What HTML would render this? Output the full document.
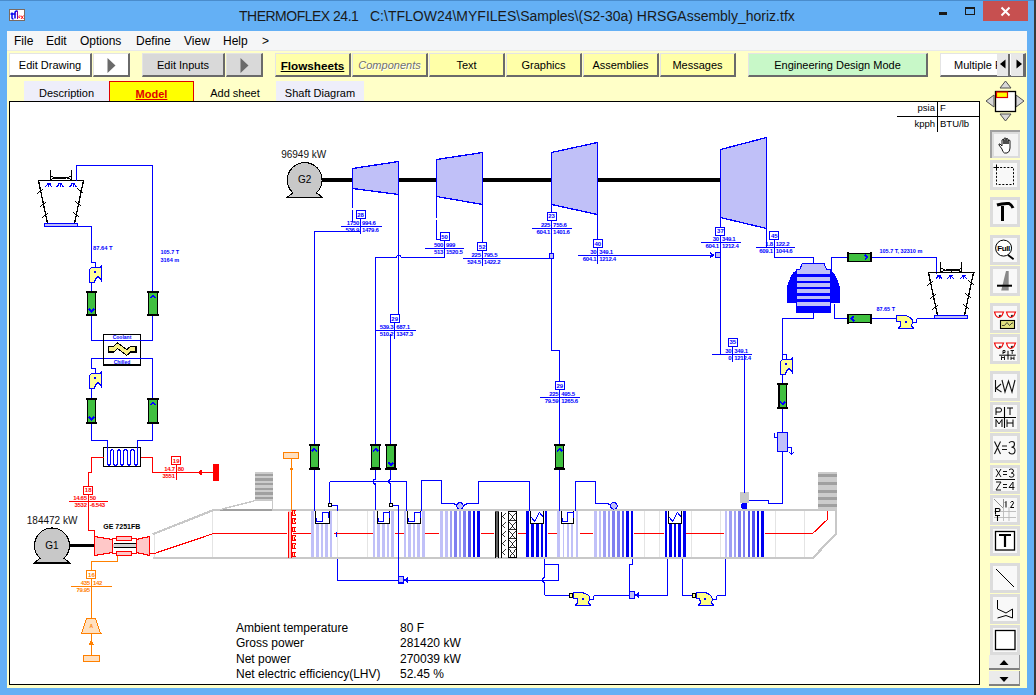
<!DOCTYPE html>
<html><head><meta charset="utf-8">
<style>
*{margin:0;padding:0;box-sizing:border-box}
html,body{width:1036px;height:695px;overflow:hidden;background:#64B0F5;font-family:"Liberation Sans",sans-serif;}
.a{position:absolute;white-space:nowrap}
#title{left:239px;top:8px;font-size:14px;color:#1a1a1a;}
#menu{left:7px;top:31px;width:1020px;height:20px;background:#F5F6F7;border-bottom:1px solid #E8E9EA}
.mi{position:absolute;top:3px;font-size:12px;color:#000}
#tool{left:7px;top:51px;width:1020px;height:637px;background:#FFFFC8}
.btn{position:absolute;top:53px;height:24px;font-size:11px;text-align:center;line-height:23px;color:#000;
 border-top:1px solid #E4E4E4;border-left:1px solid #E4E4E4;border-right:2px solid #6A6A6A;border-bottom:2px solid #6A6A6A;}
.tab{position:absolute;top:81px;height:20px;font-size:11px;text-align:center;line-height:24px}
#canvas{left:9px;top:101px;width:971px;height:584px;background:#fff;border:1px solid #000;border-right:1.4px solid #000;border-bottom:1.4px solid #000}
</style></head><body>
<div class="a" style="left:0;top:0;width:1036px;height:1px;background:#4a8ccc"></div>
<svg class="a" style="left:9px;top:9px" width="16" height="12"><rect x="0.5" y="0.5" width="15" height="11" fill="#fff" stroke="#7a6a60"/><path d="M3,3.5 V9 Q3,10 4.5,10 M1.5,5 H5.5 M6,9.5 V4 Q6,2 8,2 H8.5" stroke="#0000F0" stroke-width="1.5" fill="none"/><path d="M7.2,5 H6 M8.5,2 V10" stroke="#8000A0" stroke-width="1" fill="none"/><path d="M9.5,7.5 Q10.5,6 11,7.5 Q10.5,9.5 9.5,8.5 M12,6.5 L14.5,10 M14.5,6.5 L12,10" stroke="#FF0000" stroke-width="0.9" fill="none"/></svg>
<div class="a" id="title"><span style="letter-spacing:-0.5px">THERMOFLEX 24.1</span>&nbsp;&nbsp;&nbsp;C:\TFLOW24\MYFILES\Samples\(S2-30a) HRSGAssembly_horiz.tfx</div>
<div class="a" style="left:939px;top:12px;width:8px;height:3px;background:#1a1a1a"></div>
<div class="a" style="left:965px;top:7px;width:10px;height:8px;border:1px solid #1a1a1a;border-top:2px solid #1a1a1a"></div>
<div class="a" style="left:983px;top:1px;width:45px;height:20px;background:#C75050"></div>
<svg class="a" style="left:983px;top:1px" width="45" height="20"><path d="M18.5 6.5 L26.5 14.5 M26.5 6.5 L18.5 14.5" stroke="#fff" stroke-width="2"/></svg>

<div class="a" id="menu">
 <span class="mi" style="left:7px">File</span>
 <span class="mi" style="left:39px">Edit</span>
 <span class="mi" style="left:73px">Options</span>
 <span class="mi" style="left:129px">Define</span>
 <span class="mi" style="left:177px">View</span>
 <span class="mi" style="left:216px">Help</span>
 <span class="mi" style="left:255px">&gt;</span>
</div>
<div class="a" id="tool"></div>

<div class="btn a" style="left:9px;width:83px;background:#fff">Edit Drawing</div>
<div class="btn a" style="left:93px;width:37px;background:#fff"><svg width="12" height="17" style="margin-top:3px;margin-left:2px"><path d="M1.5 1 L9.5 8.5 L1.5 16Z" fill="#6A6A6A"/></svg></div>
<div class="btn a" style="left:142px;width:83px;background:#D9D9D9">Edit Inputs</div>
<div class="btn a" style="left:226px;width:37px;background:#D9D9D9"><svg width="12" height="17" style="margin-top:3px;margin-left:2px"><path d="M1.5 1 L9.5 8.5 L1.5 16Z" fill="#6A6A6A"/></svg></div>
<div class="btn a" style="left:275px;width:76px;background:#FFFFA8;font-weight:bold;text-decoration:underline;font-size:11.7px">Flowsheets</div>
<div class="btn a" style="left:352px;width:76px;background:#FFFFA8;font-style:italic;color:#707070;text-shadow:1px 1px 0 #fff">Components</div>
<div class="btn a" style="left:429px;width:76px;background:#FFFFA8">Text</div>
<div class="btn a" style="left:506px;width:76px;background:#FFFFA8">Graphics</div>
<div class="btn a" style="left:583px;width:76px;background:#FFFFA8">Assemblies</div>
<div class="btn a" style="left:660px;width:76px;background:#FFFFA8">Messages</div>
<div class="btn a" style="left:748px;width:180px;background:#C8F8C8">Engineering Design Mode</div>
<div class="btn a" style="left:940px;width:86px;background:#fff;text-align:left;padding-left:13px;overflow:hidden">Multiple F</div>
<div class="a" style="left:997px;top:54px;width:13px;height:22px;background:#E8E8E8;border-right:2px solid #6A6A6A"><svg width="11" height="20"><path d="M3 10 L8.5 5.5 L8.5 14.5Z" fill="#000"/></svg></div>
<div class="a" style="left:1011px;top:54px;width:14px;height:22px;background:#E8E8E8;border-right:2px solid #6A6A6A"><svg width="12" height="20"><path d="M11 10 L5.5 5.5 L5.5 14.5Z" fill="#000"/></svg></div>

<div class="tab a" style="left:24px;width:85px;background:#EEEEFA">Description</div>
<div class="tab a" style="left:109px;width:85px;background:#FFFF00;border:1px solid #E00000;border-bottom:none;color:#E00000;font-weight:bold;text-decoration:underline">Model</div>
<div class="tab a" style="left:194px;width:82px;">Add sheet</div>
<div class="tab a" style="left:276px;width:88px;background:#EEEEFA">Shaft Diagram</div>

<div class="a" id="canvas"></div>
<svg class="a" style="left:0;top:0" width="1036" height="695" font-family="Liberation Sans, sans-serif" shape-rendering="crispEdges"><line x1="37.5" y1="180.5" x2="83.5" y2="180.5" stroke="#000" stroke-width="1.3"/>
<line x1="38.5" y1="180.5" x2="47.5" y2="223.5" stroke="#000" stroke-width="1.3"/>
<line x1="83.5" y1="180.5" x2="74.5" y2="223.5" stroke="#000" stroke-width="1.3"/>
<line x1="37.5" y1="193.5" x2="43.5" y2="188.5" stroke="#000" stroke-width="1"/>
<line x1="77.5" y1="188.5" x2="83.5" y2="193.5" stroke="#000" stroke-width="1"/>
<line x1="40.5" y1="206.5" x2="46.5" y2="201.5" stroke="#000" stroke-width="1"/>
<line x1="75.5" y1="201.5" x2="81.5" y2="206.5" stroke="#000" stroke-width="1"/>
<line x1="42.5" y1="217.5" x2="48.5" y2="212.5" stroke="#000" stroke-width="1"/>
<line x1="73.5" y1="212.5" x2="79.5" y2="217.5" stroke="#000" stroke-width="1"/>
<line x1="50.5" y1="169.5" x2="50.5" y2="180.5" stroke="#000" stroke-width="1.3"/>
<line x1="71.5" y1="169.5" x2="71.5" y2="180.5" stroke="#000" stroke-width="1.3"/>
<path d="M50.6,176.0 Q60.6,181.5 71.4,176.0 M50.6,179.5 Q60.6,174.5 71.4,179.5" stroke="#000" stroke-width="1" fill="none"/>
<path d="M46.6,183.0 H50.6 M48.6,183.0 L45.1,187.0 M48.6,183.0 L52.1,187.0 M48.6,183.0 V187.0" stroke="#0000FF" stroke-width="1" fill="none"/>
<path d="M58.1,183.0 H62.1 M60.1,183.0 L56.6,187.0 M60.1,183.0 L63.6,187.0 M60.1,183.0 V187.0" stroke="#0000FF" stroke-width="1" fill="none"/>
<path d="M71.1,183.0 H75.1 M73.1,183.0 L69.6,187.0 M73.1,183.0 L76.6,187.0 M73.1,183.0 V187.0" stroke="#0000FF" stroke-width="1" fill="none"/>
<rect x="44.5" y="223.5" width="33.0" height="3.0" stroke="#0000FF" stroke-width="1.2" fill="#C0C0F8"/>
<polyline points="76.5,180.5 76.5,165.5 152.5,165.5 152.5,340.5 91.5,340.5 91.5,282.5" stroke="#0000FF" stroke-width="1.3" fill="none" stroke-linejoin="miter"/>
<polyline points="77.5,226.5 91.5,226.5 91.5,262.5 95.5,262.5 95.5,267.5" stroke="#0000FF" stroke-width="1.3" fill="none" stroke-linejoin="miter"/>
<polyline points="152.5,440.5 152.5,358.5 91.5,358.5 91.5,368.5 95.5,368.5 95.5,373.5" stroke="#0000FF" stroke-width="1.3" fill="none" stroke-linejoin="miter"/>
<line x1="91.5" y1="388.5" x2="91.5" y2="440.5" stroke="#0000FF" stroke-width="1.3"/>
<text x="93" y="249.5" font-size="5.8" fill="#0000FF" text-anchor="start" font-weight="bold" >87.64 T</text>
<text x="160.5" y="253.5" font-size="5.5" fill="#0000FF" text-anchor="start" font-weight="bold" >105.7 T</text>
<text x="160.5" y="262" font-size="5.5" fill="#0000FF" text-anchor="start" font-weight="bold" >3164 m</text>
<polygon points="89.5,269.5 91.5,267.5 100.5,267.5 101.5,265.5 101.5,280.5 98.5,276.5 95.5,278.5 94.5,282.5 89.5,282.5" stroke="#0000FF" stroke-width="1.2" fill="#FFFF99"/>
<rect x="94" y="271" width="2" height="2" fill="#0000FF"/>
<rect x="87.8" y="292.5" width="7.399999999999994" height="22" fill="#40C040" stroke="#000" stroke-width="1.2"/>
<line x1="86.2" y1="292" x2="96.8" y2="292" stroke="#000" stroke-width="2"/>
<line x1="86.2" y1="315" x2="96.8" y2="315" stroke="#000" stroke-width="2"/>
<polyline points="89.0,309 91.5,311.5 94.0,309" stroke="#0000FF" stroke-width="1.8" fill="none" stroke-linejoin="miter"/>
<rect x="148.9" y="292.5" width="8.399999999999995" height="22" fill="#40C040" stroke="#000" stroke-width="1.2"/>
<line x1="147.3" y1="292" x2="158.9" y2="292" stroke="#000" stroke-width="2"/>
<line x1="147.3" y1="315" x2="158.9" y2="315" stroke="#000" stroke-width="2"/>
<polyline points="150.60000000000002,298 153.10000000000002,295.5 155.60000000000002,298" stroke="#0000FF" stroke-width="1.8" fill="none" stroke-linejoin="miter"/>
<rect x="103.5" y="334.5" width="37" height="30.5" stroke="#000" stroke-width="1.2" fill="#fff"/>
<line x1="103.5" y1="340.5" x2="140.5" y2="340.5" stroke="#0000FF" stroke-width="1.3"/>
<line x1="103.5" y1="358.5" x2="140.5" y2="358.5" stroke="#0000FF" stroke-width="1.3"/>
<text x="122" y="339.3" font-size="5" fill="#0000FF" text-anchor="middle" font-weight="bold" >Coolant</text>
<text x="122" y="364" font-size="5" fill="#0000FF" text-anchor="middle" font-weight="bold" >Chilled</text>
<path d="M108.3,346.3 L113.8,346.3 L117.5,342.8 L126.8,349.6 L130.8,346.3 L136,346.3 L136,352 L130.5,352 L126.8,355.4 L117.5,348.6 L114,352 L108.3,352 Z" fill="#F8F088" stroke="#000" stroke-width="1.1"/>
<polygon points="89.5,375.5 91.5,373.5 100.5,373.5 101.5,371.5 101.5,386.5 98.5,382.5 95.5,384.5 94.5,388.5 89.5,388.5" stroke="#0000FF" stroke-width="1.2" fill="#FFFF99"/>
<rect x="94" y="377" width="2" height="2" fill="#0000FF"/>
<rect x="87.8" y="399.5" width="7.399999999999994" height="23" fill="#40C040" stroke="#000" stroke-width="1.2"/>
<line x1="86.2" y1="399" x2="96.8" y2="399" stroke="#000" stroke-width="2"/>
<line x1="86.2" y1="423" x2="96.8" y2="423" stroke="#000" stroke-width="2"/>
<polyline points="89.0,417 91.5,419.5 94.0,417" stroke="#0000FF" stroke-width="1.8" fill="none" stroke-linejoin="miter"/>
<rect x="148.9" y="399.5" width="8.399999999999995" height="23" fill="#40C040" stroke="#000" stroke-width="1.2"/>
<line x1="147.3" y1="399" x2="158.9" y2="399" stroke="#000" stroke-width="2"/>
<line x1="147.3" y1="423" x2="158.9" y2="423" stroke="#000" stroke-width="2"/>
<polyline points="150.60000000000002,405 153.10000000000002,402.5 155.60000000000002,405" stroke="#0000FF" stroke-width="1.8" fill="none" stroke-linejoin="miter"/>
<polyline points="91.5,424.5 91.5,440.5 107.5,440.5 107.5,448.5" stroke="#0000FF" stroke-width="1.3" fill="none" stroke-linejoin="miter"/>
<polyline points="152.5,424.5 152.5,440.5 137.5,440.5 137.5,448.5" stroke="#0000FF" stroke-width="1.3" fill="none" stroke-linejoin="miter"/>
<rect x="103.5" y="447.5" width="37.0" height="19.0" stroke="#000" stroke-width="1.5" fill="#fff"/>
<path d="M107.6,447 L107.6,464 Q109.1,466.5 110.6,464 L110.6,451 Q112.1,448.3 113.6,451 L113.6,464 Q115.55,466.5 117.5,464 L117.5,451 Q119.0,448.3 120.5,451 L120.5,464 Q121.95,466.5 123.4,464 L123.4,451 Q125.4,448.3 127.4,451 L127.4,464 Q128.85000000000002,466.5 130.3,464 L130.3,451 Q132.35000000000002,448.3 134.4,451 L134.4,464 Q135.8,466.5 137.2,464 L137.2,447" stroke="#0000FF" stroke-width="1.2" fill="none"/>
<polyline points="103.5,457.5 91.5,457.5 91.5,472.5 88.5,472.5 88.5,530.5 94.5,530.5 94.5,537.5" stroke="#FF0000" stroke-width="1.3" fill="none" stroke-linejoin="miter"/>
<polyline points="140.5,457.5 152.5,457.5 152.5,472.5 213.5,472.5" stroke="#FF0000" stroke-width="1.3" fill="none" stroke-linejoin="miter"/>
<polygon points="197,472.5 201.5,469.8 201.5,475.2" fill="#FF0000"/>
<rect x="213.4" y="464.3" width="5.6" height="16.4" fill="#FF0000"/>
<rect x="83.5" y="486.5" width="9.0" height="8.0" stroke="#FF0000" stroke-width="1.2" fill="#fff"/>
<text x="88.2" y="492.2" font-size="6" fill="#FF0000" text-anchor="middle" font-weight="bold" >18</text>
<line x1="68.5" y1="501.5" x2="107.5" y2="501.5" stroke="#FF0000" stroke-width="1.2"/>
<line x1="88.5" y1="494.5" x2="88.5" y2="508.5" stroke="#FF0000" stroke-width="1.2"/>
<text x="86.7" y="499.9" font-size="6" fill="#FF0000" text-anchor="end" font-weight="bold" letter-spacing="-0.3">14.65</text>
<text x="89.7" y="499.9" font-size="6" fill="#FF0000" text-anchor="start" font-weight="bold" letter-spacing="-0.3">50</text>
<text x="86.7" y="506.9" font-size="6" fill="#FF0000" text-anchor="end" font-weight="bold" letter-spacing="-0.3">3532</text>
<text x="89.7" y="506.9" font-size="6" fill="#FF0000" text-anchor="start" font-weight="bold" letter-spacing="-0.3">-6.543</text>
<rect x="171.5" y="456.5" width="9.0" height="8.0" stroke="#FF0000" stroke-width="1.2" fill="#fff"/>
<text x="176.2" y="462.59999999999997" font-size="6" fill="#FF0000" text-anchor="middle" font-weight="bold" >19</text>
<line x1="176.5" y1="464.5" x2="176.5" y2="479.5" stroke="#FF0000" stroke-width="1.2"/>
<text x="174.7" y="470.9" font-size="6" fill="#FF0000" text-anchor="end" font-weight="bold" letter-spacing="-0.3">14.7</text>
<text x="177.7" y="470.9" font-size="6" fill="#FF0000" text-anchor="start" font-weight="bold" letter-spacing="-0.3">80</text>
<text x="174.7" y="477.9" font-size="6" fill="#FF0000" text-anchor="end" font-weight="bold" letter-spacing="-0.3">3551</text>
<text x="177.7" y="477.9" font-size="6" fill="#FF0000" text-anchor="start" font-weight="bold" letter-spacing="-0.3"></text>
<path d="M40.07,558.3 A17.5,17.5 0 1 1 63.93,558.3 L69.8,563.0 L34.2,563.0 Z" fill="#C8C8C8" stroke="#000" stroke-width="1.1"/>
<text x="52" y="548.8" font-size="10" fill="#000" text-anchor="middle" font-weight="normal" >G1</text>
<line x1="70" y1="545.5" x2="95" y2="545.5" stroke="#000" stroke-width="3.5"/>
<text x="26.8" y="524" font-size="10" fill="#111" text-anchor="start" font-weight="normal" letter-spacing="0">184472 kW</text>
<text x="103.3" y="529" font-size="7" fill="#000" text-anchor="start" font-weight="bold" >GE 7251FB</text>
<polygon points="94.5,536.5 112.5,539.5 112.5,552.5 94.5,555.5" stroke="#FF0000" stroke-width="1.2" fill="#FFC8C8"/>
<rect x="112.5" y="538.5" width="24.0" height="15.0" stroke="#FF0000" stroke-width="1.2" fill="#fff"/>
<rect x="113" y="544" width="23.5" height="3.5" fill="#D4D4D4"/>
<line x1="113.5" y1="543.5" x2="136.5" y2="543.5" stroke="#000" stroke-width="1.1"/>
<line x1="113.5" y1="547.5" x2="136.5" y2="547.5" stroke="#000" stroke-width="1.1"/>
<rect x="116.5" y="536.5" width="15.0" height="4.0" stroke="#FF0000" stroke-width="1.1" fill="#FFC8C8"/>
<rect x="116.5" y="551.5" width="15.0" height="4.0" stroke="#FF0000" stroke-width="1.1" fill="#FFC8C8"/>
<polygon points="136.5,539.5 149.5,536.5 149.5,555.5 136.5,552.5" stroke="#FF0000" stroke-width="1.2" fill="#FFC8C8"/>
<polyline points="117.5,555.5 117.5,561.5 91.5,561.5 91.5,618.5" stroke="#FF8000" stroke-width="1.3" fill="none" stroke-linejoin="miter"/>
<rect x="86.5" y="570.5" width="9.0" height="8.0" stroke="#FF8000" stroke-width="1.2" fill="#fff"/>
<text x="91.4" y="576.5" font-size="6" fill="#FF8000" text-anchor="middle" font-weight="bold" >16</text>
<line x1="70.5" y1="586.5" x2="111.5" y2="586.5" stroke="#FF8000" stroke-width="1.2"/>
<line x1="91.5" y1="578.5" x2="91.5" y2="593.5" stroke="#FF8000" stroke-width="1.2"/>
<text x="89.9" y="584.5" font-size="6" fill="#FF8000" text-anchor="end" font-weight="bold" letter-spacing="-0.3">435</text>
<text x="92.9" y="584.5" font-size="6" fill="#FF8000" text-anchor="start" font-weight="bold" letter-spacing="-0.3">142</text>
<text x="89.9" y="591.5" font-size="6" fill="#FF8000" text-anchor="end" font-weight="bold" letter-spacing="-0.3">79.95</text>
<text x="92.9" y="591.5" font-size="6" fill="#FF8000" text-anchor="start" font-weight="bold" letter-spacing="-0.3"></text>
<polygon points="86.5,618.5 95.5,618.5 100.5,633.5 81.5,633.5" stroke="#FF8000" stroke-width="1.2" fill="#FFE0C0"/>
<line x1="81.5" y1="633.5" x2="101.5" y2="633.5" stroke="#FF8000" stroke-width="1.3"/>
<text x="91.3" y="627.5" font-size="5" fill="#FF8000" text-anchor="middle" font-weight="bold" >A</text>
<line x1="91.5" y1="633.5" x2="91.5" y2="655.5" stroke="#FF8000" stroke-width="1.3"/>
<polygon points="91.3,640 88.8,644.5 93.8,644.5" fill="#FF8000"/>
<rect x="83.5" y="655.5" width="16.0" height="6.0" stroke="#FF8000" stroke-width="1.2" fill="#FFE0C0"/>
<line x1="154.5" y1="534.5" x2="154.5" y2="558.5" stroke="#E4E4E4" stroke-width="1"/>
<line x1="212.5" y1="510.5" x2="212.5" y2="558.5" stroke="#E4E4E4" stroke-width="1"/>
<line x1="337.5" y1="510.5" x2="337.5" y2="558.5" stroke="#E4E4E4" stroke-width="1"/>
<line x1="367.5" y1="510.5" x2="367.5" y2="558.5" stroke="#E4E4E4" stroke-width="1"/>
<line x1="644.5" y1="510.5" x2="644.5" y2="558.5" stroke="#E4E4E4" stroke-width="1"/>
<line x1="659.5" y1="510.5" x2="659.5" y2="558.5" stroke="#E4E4E4" stroke-width="1"/>
<line x1="691.5" y1="510.5" x2="691.5" y2="558.5" stroke="#E4E4E4" stroke-width="1"/>
<line x1="720.5" y1="510.5" x2="720.5" y2="558.5" stroke="#E4E4E4" stroke-width="1"/>
<line x1="775.5" y1="510.5" x2="775.5" y2="558.5" stroke="#E4E4E4" stroke-width="1"/>
<line x1="804.5" y1="510.5" x2="804.5" y2="558.5" stroke="#E4E4E4" stroke-width="1"/>
<polyline points="149.5,553.5 154.5,553.5 213.5,533.5 812.5,533.5 827.5,519.5 827.5,510.5" stroke="#FF0000" stroke-width="1.2" fill="none" stroke-linejoin="miter"/>
<polyline points="152.5,558 812.8,558 836.2,533.7 836.2,510 213.4,510 152.5,534.3" stroke="#C8C8C8" stroke-width="2.2" fill="none" stroke-linejoin="miter"/>
<line x1="220" y1="510" x2="272.9" y2="510" stroke="#A0A0A0" stroke-width="2.2"/>
<rect x="255.2" y="472.1" width="17.7" height="28.5" fill="#CCCCCC"/>
<rect x="255.2" y="474.1" width="17.7" height="2.1999999999999886" fill="#A0A0A0"/>
<rect x="255.2" y="478.4" width="17.7" height="2.400000000000034" fill="#A0A0A0"/>
<rect x="255.2" y="483" width="17.7" height="2" fill="#A0A0A0"/>
<rect x="255.2" y="487.5" width="17.7" height="2.3999999999999773" fill="#A0A0A0"/>
<rect x="255.2" y="492.3" width="17.7" height="2.1999999999999886" fill="#A0A0A0"/>
<rect x="255.2" y="496.6" width="17.7" height="2.3999999999999773" fill="#A0A0A0"/>
<polyline points="220.5,509.5 255.5,500.5 272.5,500.5 272.5,510.5" stroke="#C8C8C8" stroke-width="1.4" fill="none" stroke-linejoin="miter"/>
<rect x="818.1" y="472.2" width="18.4" height="38" fill="#CCCCCC"/>
<rect x="818.1" y="474.3" width="18.4" height="3" fill="#A0A0A0"/>
<rect x="818.1" y="482.3" width="18.4" height="3" fill="#A0A0A0"/>
<rect x="818.1" y="489.5" width="18.4" height="3" fill="#A0A0A0"/>
<rect x="818.1" y="497.2" width="18.4" height="3" fill="#A0A0A0"/>
<rect x="818.1" y="504" width="18.4" height="3" fill="#A0A0A0"/>
<rect x="311" y="532" width="23" height="3" fill="#fff"/>
<rect x="373" y="532" width="22" height="3" fill="#fff"/>
<rect x="404" y="532" width="21" height="3" fill="#fff"/>
<rect x="439" y="532" width="42" height="3" fill="#fff"/>
<rect x="494" y="532" width="24" height="3" fill="#fff"/>
<rect x="526" y="532" width="22" height="3" fill="#fff"/>
<rect x="557" y="532" width="23" height="3" fill="#fff"/>
<rect x="593" y="532" width="41" height="3" fill="#fff"/>
<rect x="664" y="532" width="22" height="3" fill="#fff"/>
<rect x="724" y="532" width="41" height="3" fill="#fff"/>
<rect x="311.3" y="511" width="2.5" height="46" fill="#C0C0F8"/>
<rect x="315.9" y="511" width="2.6000000000000227" height="46" fill="#C0C0F8"/>
<rect x="321" y="511" width="2.1999999999999886" height="46" fill="#C0C0F8"/>
<rect x="325" y="511" width="2.8000000000000114" height="46" fill="#C0C0F8"/>
<rect x="329.7" y="511" width="2.1999999999999886" height="46" fill="#C0C0F8"/>
<rect x="373.1" y="511" width="2.1999999999999886" height="46" fill="#C0C0F8"/>
<rect x="377.2" y="511" width="2.400000000000034" height="46" fill="#C0C0F8"/>
<rect x="382.2" y="511" width="2.5" height="46" fill="#C0C0F8"/>
<rect x="386.9" y="511" width="2.1000000000000227" height="46" fill="#C0C0F8"/>
<rect x="391.2" y="511" width="2.6000000000000227" height="46" fill="#C0C0F8"/>
<rect x="404" y="511" width="2" height="46" fill="#C0C0F8"/>
<rect x="408.3" y="511" width="2.5" height="46" fill="#C0C0F8"/>
<rect x="413" y="511" width="2.3999999999999773" height="46" fill="#C0C0F8"/>
<rect x="417.3" y="511" width="2.3999999999999773" height="46" fill="#C0C0F8"/>
<rect x="422.3" y="511" width="2.5" height="46" fill="#C0C0F8"/>
<rect x="439.8" y="511" width="2.8999999999999773" height="46" fill="#C0C0F8"/>
<rect x="444.9" y="511" width="3.2000000000000455" height="46" fill="#C0C0F8"/>
<rect x="450" y="511" width="2.3999999999999773" height="46" fill="#A0A0F4"/>
<rect x="453.9" y="511" width="3.3000000000000114" height="46" fill="#8080F0"/>
<rect x="459" y="511" width="2.1000000000000227" height="46" fill="#A0A0F4"/>
<rect x="463" y="511" width="2.8999999999999773" height="46" fill="#8080F0"/>
<rect x="467.9" y="511" width="2.900000000000034" height="46" fill="#5050F0"/>
<rect x="473" y="511" width="2.1999999999999886" height="46" fill="#0000F0"/>
<rect x="477" y="511" width="3" height="46" fill="#0000F0"/>
<rect x="526.3" y="511" width="2.900000000000091" height="46" fill="#0000F0"/>
<rect x="531.3" y="511" width="2.7000000000000455" height="46" fill="#0000F0"/>
<rect x="536.4" y="511" width="2.2000000000000455" height="46" fill="#0000F0"/>
<rect x="540.8" y="511" width="2.400000000000091" height="46" fill="#0000F0"/>
<rect x="545.1" y="511" width="1.8999999999999773" height="46" fill="#0000F0"/>
<rect x="557.4" y="511" width="2.6000000000000227" height="46" fill="#C0C0F8"/>
<rect x="562.5" y="511" width="1.5" height="46" fill="#C0C0F8"/>
<rect x="566.8" y="511" width="1.900000000000091" height="46" fill="#C0C0F8"/>
<rect x="571.2" y="511" width="2.099999999999909" height="46" fill="#C0C0F8"/>
<rect x="575.8" y="511" width="2.2000000000000455" height="46" fill="#C0C0F8"/>
<rect x="593.9" y="511" width="2.8999999999999773" height="46" fill="#C0C0F8"/>
<rect x="599" y="511" width="1.7000000000000455" height="46" fill="#C0C0F8"/>
<rect x="603" y="511" width="2.8999999999999773" height="46" fill="#A0A0F4"/>
<rect x="607.9" y="511" width="1.8999999999999773" height="46" fill="#A0A0F4"/>
<rect x="612" y="511" width="2.8999999999999773" height="46" fill="#8080F0"/>
<rect x="617" y="511" width="3" height="46" fill="#8080F0"/>
<rect x="621.8" y="511" width="2.1000000000000227" height="46" fill="#5050F0"/>
<rect x="626.2" y="511" width="2.8999999999999773" height="46" fill="#0000F0"/>
<rect x="630.8" y="511" width="2.2000000000000455" height="46" fill="#0000F0"/>
<rect x="664.8" y="511" width="2.2000000000000455" height="46" fill="#0000F0"/>
<rect x="669.2" y="511" width="2.7999999999999545" height="46" fill="#0000F0"/>
<rect x="674" y="511" width="2" height="46" fill="#0000F0"/>
<rect x="677.9" y="511" width="2.8999999999999773" height="46" fill="#0000F0"/>
<rect x="682.9" y="511" width="2.8999999999999773" height="46" fill="#0000F0"/>
<rect x="724.7" y="511" width="2.199999999999932" height="46" fill="#C0C0F8"/>
<rect x="729.1" y="511" width="2.8999999999999773" height="46" fill="#A0A0F4"/>
<rect x="734.2" y="511" width="1.7999999999999545" height="46" fill="#A0A0F4"/>
<rect x="738.1" y="511" width="2.6000000000000227" height="46" fill="#8080F0"/>
<rect x="743.3" y="511" width="1.7000000000000455" height="46" fill="#8080F0"/>
<rect x="747.9" y="511" width="1.8999999999999773" height="46" fill="#5050F0"/>
<rect x="752" y="511" width="2.8999999999999773" height="46" fill="#5050F0"/>
<rect x="756.9" y="511" width="1.8999999999999773" height="46" fill="#0000F0"/>
<rect x="760.9" y="511" width="3.2000000000000455" height="46" fill="#0000F0"/>
<line x1="336.5" y1="531.5" x2="336.5" y2="536.5" stroke="#0000FF" stroke-width="1"/>
<line x1="398.5" y1="531.5" x2="398.5" y2="536.5" stroke="#0000FF" stroke-width="1"/>
<rect x="287" y="531.5" width="6" height="3.5" fill="#fff"/>
<rect x="288.4" y="511" width="3.1" height="46" fill="#FFC8C8"/>
<line x1="288.5" y1="511.5" x2="288.5" y2="557.5" stroke="#FF0000" stroke-width="1.3"/>
<line x1="291.5" y1="511.5" x2="291.5" y2="557.5" stroke="#FF0000" stroke-width="1.3"/>
<polygon points="292,510.19999999999993 295.6,510.19999999999993 294.2,512.8 295.6,515.0999999999999 292,515.0999999999999" fill="#FFF4C0" stroke="#FF0000" stroke-width="1"/>
<polygon points="292,518.4 295.6,518.4 294.2,521 295.6,523.3 292,523.3" fill="#FFF4C0" stroke="#FF0000" stroke-width="1"/>
<polygon points="292,527.0 295.6,527.0 294.2,529.6 295.6,531.9 292,531.9" fill="#FFF4C0" stroke="#FF0000" stroke-width="1"/>
<polygon points="292,535.6 295.6,535.6 294.2,538.2 295.6,540.5 292,540.5" fill="#FFF4C0" stroke="#FF0000" stroke-width="1"/>
<polygon points="292,543.8 295.6,543.8 294.2,546.4 295.6,548.6999999999999 292,548.6999999999999" fill="#FFF4C0" stroke="#FF0000" stroke-width="1"/>
<polygon points="292,552.0 295.6,552.0 294.2,554.6 295.6,556.9 292,556.9" fill="#FFF4C0" stroke="#FF0000" stroke-width="1"/>
<rect x="495.2" y="511" width="4" height="46" fill="#606060"/>
<line x1="495.5" y1="511.5" x2="495.5" y2="557.5" stroke="#000" stroke-width="1"/>
<line x1="498.5" y1="511.5" x2="498.5" y2="557.5" stroke="#000" stroke-width="1"/>
<line x1="501.5" y1="511.5" x2="501.5" y2="557.5" stroke="#000" stroke-width="1.3"/>
<line x1="502.5" y1="515.5" x2="505.5" y2="512.5" stroke="#000" stroke-width="0.8"/>
<line x1="502.5" y1="515.5" x2="505.5" y2="518.5" stroke="#000" stroke-width="0.8"/>
<line x1="502.5" y1="524.5" x2="505.5" y2="521.5" stroke="#000" stroke-width="0.8"/>
<line x1="502.5" y1="524.5" x2="505.5" y2="527.5" stroke="#000" stroke-width="0.8"/>
<line x1="502.5" y1="533.5" x2="505.5" y2="530.5" stroke="#000" stroke-width="0.8"/>
<line x1="502.5" y1="533.5" x2="505.5" y2="536.5" stroke="#000" stroke-width="0.8"/>
<line x1="502.5" y1="542.5" x2="505.5" y2="539.5" stroke="#000" stroke-width="0.8"/>
<line x1="502.5" y1="542.5" x2="505.5" y2="545.5" stroke="#000" stroke-width="0.8"/>
<line x1="502.5" y1="551.5" x2="505.5" y2="548.5" stroke="#000" stroke-width="0.8"/>
<line x1="502.5" y1="551.5" x2="505.5" y2="554.5" stroke="#000" stroke-width="0.8"/>
<rect x="508.5" y="511.5" width="8.0" height="46.0" stroke="#000" stroke-width="1" fill="none"/>
<line x1="508.5" y1="520.5" x2="516.5" y2="520.5" stroke="#000" stroke-width="0.8"/>
<line x1="508.5" y1="511.5" x2="516.5" y2="520.5" stroke="#000" stroke-width="0.8"/>
<line x1="516.5" y1="511.5" x2="508.5" y2="520.5" stroke="#000" stroke-width="0.8"/>
<line x1="508.5" y1="529.5" x2="516.5" y2="529.5" stroke="#000" stroke-width="0.8"/>
<line x1="508.5" y1="520.5" x2="516.5" y2="529.5" stroke="#000" stroke-width="0.8"/>
<line x1="516.5" y1="520.5" x2="508.5" y2="529.5" stroke="#000" stroke-width="0.8"/>
<line x1="508.5" y1="538.5" x2="516.5" y2="538.5" stroke="#000" stroke-width="0.8"/>
<line x1="508.5" y1="529.5" x2="516.5" y2="538.5" stroke="#000" stroke-width="0.8"/>
<line x1="516.5" y1="529.5" x2="508.5" y2="538.5" stroke="#000" stroke-width="0.8"/>
<line x1="508.5" y1="547.5" x2="516.5" y2="547.5" stroke="#000" stroke-width="0.8"/>
<line x1="508.5" y1="538.5" x2="516.5" y2="547.5" stroke="#000" stroke-width="0.8"/>
<line x1="516.5" y1="538.5" x2="508.5" y2="547.5" stroke="#000" stroke-width="0.8"/>
<line x1="508.5" y1="557.5" x2="516.5" y2="557.5" stroke="#000" stroke-width="0.8"/>
<line x1="508.5" y1="547.5" x2="516.5" y2="557.5" stroke="#000" stroke-width="0.8"/>
<line x1="516.5" y1="547.5" x2="508.5" y2="557.5" stroke="#000" stroke-width="0.8"/>
<rect x="315.2" y="511" width="13.800000000000011" height="12.5" fill="#fff"/>
<polyline points="315.5,510.5 315.5,523.5 329.5,523.5 329.5,510.5" stroke="#000" stroke-width="1.3" fill="none" stroke-linejoin="miter"/>
<polyline points="316.5,517.5 316.5,521.5 322.5,521.5 322.5,512.5 328.5,512.5 328.5,517.5" stroke="#0000FF" stroke-width="1.2" fill="none" stroke-linejoin="miter"/>
<rect x="377.2" y="511" width="12.600000000000023" height="12.5" fill="#fff"/>
<polyline points="377.5,510.5 377.5,523.5 389.5,523.5 389.5,510.5" stroke="#000" stroke-width="1.3" fill="none" stroke-linejoin="miter"/>
<polyline points="378.5,517.5 378.5,521.5 383.5,521.5 383.5,512.5 389.5,512.5 389.5,517.5" stroke="#0000FF" stroke-width="1.2" fill="none" stroke-linejoin="miter"/>
<rect x="407.1" y="511" width="13.799999999999955" height="12.5" fill="#fff"/>
<polyline points="407.5,510.5 407.5,523.5 420.5,523.5 420.5,510.5" stroke="#000" stroke-width="1.3" fill="none" stroke-linejoin="miter"/>
<polyline points="408.5,517.5 408.5,521.5 414.5,521.5 414.5,512.5 420.5,512.5 420.5,517.5" stroke="#0000FF" stroke-width="1.2" fill="none" stroke-linejoin="miter"/>
<rect x="530.2" y="511" width="13.399999999999977" height="12.5" fill="#fff"/>
<polyline points="530.5,510.5 530.5,523.5 543.5,523.5 543.5,510.5" stroke="#000" stroke-width="1.3" fill="none" stroke-linejoin="miter"/>
<polyline points="530.5,517.5 531.5,517.5 534.5,521.5 539.5,512.5 543.5,517.5" stroke="#0000FF" stroke-width="1" fill="none" stroke-linejoin="miter"/>
<rect x="561" y="511" width="12.799999999999955" height="12.5" fill="#fff"/>
<polyline points="561.5,510.5 561.5,523.5 573.5,523.5 573.5,510.5" stroke="#000" stroke-width="1.3" fill="none" stroke-linejoin="miter"/>
<polyline points="562.5,517.5 562.5,521.5 567.5,521.5 567.5,512.5 573.5,512.5 573.5,517.5" stroke="#0000FF" stroke-width="1.2" fill="none" stroke-linejoin="miter"/>
<rect x="668.2" y="511" width="13.599999999999909" height="12.5" fill="#fff"/>
<polyline points="668.5,510.5 668.5,523.5 681.5,523.5 681.5,510.5" stroke="#000" stroke-width="1.3" fill="none" stroke-linejoin="miter"/>
<polyline points="668.5,517.5 669.5,517.5 672.5,521.5 677.5,512.5 681.5,517.5" stroke="#0000FF" stroke-width="1" fill="none" stroke-linejoin="miter"/>
<polyline points="329.5,481.5 406.5,481.5 406.5,510.5" stroke="#0000FF" stroke-width="1.3" fill="none" stroke-linejoin="miter"/>
<line x1="329.5" y1="481.5" x2="329.5" y2="503.5" stroke="#0000FF" stroke-width="1.3"/>
<rect x="328.5" y="503.5" width="3.0" height="3.0" stroke="#000" stroke-width="1" fill="#fff"/>
<polyline points="331.5,505.5 337.5,505.5 337.5,510.5" stroke="#0000FF" stroke-width="1.3" fill="none" stroke-linejoin="miter"/>
<polyline points="337.5,558.5 337.5,580.5 398.5,580.5" stroke="#0000FF" stroke-width="1.3" fill="none" stroke-linejoin="miter"/>
<path d="M390.5,469 L390.5,479.1 L389.5,479.40000000000003 L388.3,481.6 L389.5,483.8 L390.5,484.1 L390.5,503.4" stroke="#0000FF" stroke-width="1.3" fill="none"/>
<rect x="389.5" y="503.5" width="3.0" height="3.0" stroke="#000" stroke-width="1" fill="#fff"/>
<polyline points="392.5,505.5 398.5,505.5 398.5,580.5" stroke="#0000FF" stroke-width="1.3" fill="none" stroke-linejoin="miter"/>
<line x1="314.5" y1="469.5" x2="314.5" y2="510.5" stroke="#0000FF" stroke-width="1.3"/>
<path d="M375.3,469 L375.3,479.1 L374.3,479.40000000000003 L373.1,481.6 L374.3,483.8 L375.3,484.1 L375.3,510" stroke="#0000FF" stroke-width="1.3" fill="none"/>
<polyline points="421.5,510.5 421.5,480.5 441.5,480.5 441.5,503.5 453.5,503.5 457.5,505.5" stroke="#0000FF" stroke-width="1.3" fill="none" stroke-linejoin="miter"/>
<polyline points="463.5,505.5 467.5,503.5 478.5,503.5 478.5,481.5 529.5,481.5 529.5,510.5" stroke="#0000FF" stroke-width="1.3" fill="none" stroke-linejoin="miter"/>
<circle cx="460" cy="505.9" r="3.2" fill="#C0C0F8" stroke="#0000FF" stroke-width="1"/>
<line x1="559.5" y1="469.5" x2="559.5" y2="510.5" stroke="#0000FF" stroke-width="1.3"/>
<polyline points="575.5,510.5 575.5,481.5 595.5,481.5 595.5,503.5 607.5,503.5 611.5,505.5" stroke="#0000FF" stroke-width="1.3" fill="none" stroke-linejoin="miter"/>
<circle cx="613.9" cy="505.9" r="3.2" fill="#C0C0F8" stroke="#0000FF" stroke-width="1"/>
<rect x="740" y="492" width="8.6" height="10.6" fill="#C8C8C8"/>
<circle cx="744.3" cy="506" r="3.2" fill="#0000FF"/>
<polyline points="748.5,500.5 768.5,500.5 768.5,503.5 782.5,503.5 782.5,451.5" stroke="#0000FF" stroke-width="1.3" fill="none" stroke-linejoin="miter"/>
<line x1="744.5" y1="354.5" x2="744.5" y2="492.5" stroke="#0000FF" stroke-width="1.3"/>
<polyline points="398.5,580.5 544.5,580.5" stroke="#0000FF" stroke-width="1.3" fill="none" stroke-linejoin="miter"/>
<rect x="398.2" y="576.5" width="5" height="6.5" fill="#C0C0F8" stroke="#0000FF" stroke-width="1.1"/>
<polygon points="403.5,580 408,577 408,583" fill="#0000FF"/>
<polyline points="544.5,558.5 544.5,564.5 558.5,564.5 558.5,580.5 544.5,580.5" stroke="#0000FF" stroke-width="1.3" fill="none" stroke-linejoin="miter"/>
<path d="M544.4,564.3 L544.4,577.6 L543.4,577.9 L542.1999999999999,580.1 L543.4,582.3000000000001 L544.4,582.6 L544.4,595.4" stroke="#0000FF" stroke-width="1.3" fill="none"/>
<polyline points="544.5,595.5 570.5,595.5" stroke="#0000FF" stroke-width="1.3" fill="none" stroke-linejoin="miter"/>
<polyline points="589.5,599.5 593.5,599.5 593.5,595.5" stroke="#0000FF" stroke-width="1.3" fill="none" stroke-linejoin="miter"/>
<polygon points="573.5,592.5 574.5,592.5 582.5,592.5 584.5,593.5 587.5,594.5 589.5,596.5 589.5,599.5 588.5,602.5 590.5,605.5 575.5,605.5 577.5,602.5 577.5,598.5 573.5,598.5" stroke="#0000FF" stroke-width="1.2" fill="#FFFF88"/>
<rect x="582" y="598" width="2" height="2" fill="#0000FF"/>
<rect x="569.3" y="593.8" width="3.6" height="3.2" fill="#FFFF88" stroke="#000" stroke-width="1"/>
<polyline points="593.5,595.5 629.5,595.5" stroke="#0000FF" stroke-width="1.3" fill="none" stroke-linejoin="miter"/>
<rect x="629.4" y="591.3" width="5" height="7" fill="#C0C0F8" stroke="#0000FF" stroke-width="1.1"/>
<polygon points="634.4,595 639,592 639,598" fill="#0000FF"/>
<polyline points="634.5,595.5 667.5,595.5 667.5,558.5" stroke="#0000FF" stroke-width="1.3" fill="none" stroke-linejoin="miter"/>
<polyline points="629.5,591.5 629.5,564.5 632.5,564.5 632.5,558.5" stroke="#0000FF" stroke-width="1.3" fill="none" stroke-linejoin="miter"/>
<polyline points="682.5,558.5 682.5,595.5 692.5,595.5" stroke="#0000FF" stroke-width="1.3" fill="none" stroke-linejoin="miter"/>
<polyline points="712.5,599.5 716.5,599.5 716.5,595.5" stroke="#0000FF" stroke-width="1.3" fill="none" stroke-linejoin="miter"/>
<polygon points="696.5,592.5 697.5,592.5 705.5,592.5 707.5,593.5 709.5,594.5 711.5,596.5 712.5,599.5 711.5,602.5 713.5,605.5 698.5,605.5 700.5,602.5 699.5,598.5 696.5,598.5" stroke="#0000FF" stroke-width="1.2" fill="#FFFF88"/>
<rect x="704" y="598" width="2" height="2" fill="#0000FF"/>
<rect x="692.1999999999999" y="593.8" width="3.6" height="3.2" fill="#FFFF88" stroke="#000" stroke-width="1"/>
<polyline points="716.5,595.5 725.5,595.5 725.5,558.5" stroke="#0000FF" stroke-width="1.3" fill="none" stroke-linejoin="miter"/>
<path d="M292.91,192.8 A17.4,17.4 0 1 1 316.49,192.8 L322.4,197.4 L287.0,197.4 Z" fill="#C8C8C8" stroke="#000" stroke-width="1.1"/>
<text x="304.7" y="183.3" font-size="10" fill="#000" text-anchor="middle" font-weight="normal" >G2</text>
<text x="281.2" y="158.3" font-size="10" fill="#111" text-anchor="start" font-weight="normal" letter-spacing="0">96949 kW</text>
<line x1="322" y1="180" x2="720.4" y2="180" stroke="#000" stroke-width="4"/>
<polygon points="352.5,168.5 398.5,161.5 398.5,194.5 352.5,188.5" stroke="#0000FF" stroke-width="1.3" fill="#C0C0F8"/>
<polygon points="436.5,159.5 482.5,152.5 482.5,204.5 436.5,196.5" stroke="#0000FF" stroke-width="1.3" fill="#C0C0F8"/>
<polygon points="551.5,152.5 597.5,142.5 597.5,214.5 551.5,204.5" stroke="#0000FF" stroke-width="1.3" fill="#C0C0F8"/>
<polygon points="720.5,149.5 766.5,137.5 766.5,228.5 720.5,217.5" stroke="#0000FF" stroke-width="1.3" fill="#C0C0F8"/>
<line x1="352.5" y1="188.5" x2="352.5" y2="207.5" stroke="#0000FF" stroke-width="1.3"/>
<rect x="356.5" y="210.5" width="9.0" height="8.0" stroke="#0000FF" stroke-width="1.2" fill="#fff"/>
<text x="360.5" y="216.7" font-size="6" fill="#0000FF" text-anchor="middle" font-weight="bold" >28</text>
<line x1="340.5" y1="226.5" x2="381.5" y2="226.5" stroke="#0000FF" stroke-width="1.2"/>
<line x1="360.5" y1="218.5" x2="360.5" y2="233.5" stroke="#0000FF" stroke-width="1.2"/>
<text x="359.0" y="224.70000000000002" font-size="6" fill="#0000FF" text-anchor="end" font-weight="bold" letter-spacing="-0.3">1750</text>
<text x="362.0" y="224.70000000000002" font-size="6" fill="#0000FF" text-anchor="start" font-weight="bold" letter-spacing="-0.3">994.6</text>
<text x="359.0" y="231.70000000000002" font-size="6" fill="#0000FF" text-anchor="end" font-weight="bold" letter-spacing="-0.3">536.9</text>
<text x="362.0" y="231.70000000000002" font-size="6" fill="#0000FF" text-anchor="start" font-weight="bold" letter-spacing="-0.3">1479.6</text>
<line x1="352.5" y1="209.5" x2="352.5" y2="221.5" stroke="#0000FF" stroke-width="1.3"/>
<polyline points="360.5,231.5 314.5,231.5 314.5,444.5" stroke="#0000FF" stroke-width="1.3" fill="none" stroke-linejoin="miter"/>
<polyline points="398.5,194.5 398.5,314.5" stroke="#0000FF" stroke-width="1.3" fill="none" stroke-linejoin="miter"/>
<rect x="390.5" y="314.5" width="9.0" height="8.0" stroke="#0000FF" stroke-width="1.2" fill="#fff"/>
<text x="394.7" y="320.7" font-size="6" fill="#0000FF" text-anchor="middle" font-weight="bold" >29</text>
<line x1="374.5" y1="330.5" x2="415.5" y2="330.5" stroke="#0000FF" stroke-width="1.2"/>
<line x1="394.5" y1="322.5" x2="394.5" y2="338.5" stroke="#0000FF" stroke-width="1.2"/>
<text x="393.2" y="328.79999999999995" font-size="6" fill="#0000FF" text-anchor="end" font-weight="bold" letter-spacing="-0.3">539.3</text>
<text x="396.2" y="328.79999999999995" font-size="6" fill="#0000FF" text-anchor="start" font-weight="bold" letter-spacing="-0.3">687.1</text>
<text x="393.2" y="335.79999999999995" font-size="6" fill="#0000FF" text-anchor="end" font-weight="bold" letter-spacing="-0.3">510.2</text>
<text x="396.2" y="335.79999999999995" font-size="6" fill="#0000FF" text-anchor="start" font-weight="bold" letter-spacing="-0.3">1347.3</text>
<line x1="390.5" y1="333.5" x2="390.5" y2="444.5" stroke="#0000FF" stroke-width="1.3"/>
<path d="M375.3,444 L375.3,257.3 L396,257.3 Q398.6,253 401.2,257.3 L444.3,257.3" stroke="#0000FF" stroke-width="1.3" fill="none"/>
<line x1="436.5" y1="196.5" x2="436.5" y2="217.5" stroke="#0000FF" stroke-width="1.3"/>
<polyline points="436.5,219.5 436.5,239.5 439.5,239.5" stroke="#0000FF" stroke-width="1.3" fill="none" stroke-linejoin="miter"/>
<rect x="440.5" y="232.5" width="9.0" height="8.0" stroke="#0000FF" stroke-width="1.2" fill="#fff"/>
<text x="444.5" y="238.6" font-size="6" fill="#0000FF" text-anchor="middle" font-weight="bold" >50</text>
<line x1="424.5" y1="248.5" x2="463.5" y2="248.5" stroke="#0000FF" stroke-width="1.2"/>
<line x1="444.5" y1="240.5" x2="444.5" y2="257.5" stroke="#0000FF" stroke-width="1.2"/>
<text x="443.0" y="246.8" font-size="6" fill="#0000FF" text-anchor="end" font-weight="bold" letter-spacing="-0.3">500</text>
<text x="446.0" y="246.8" font-size="6" fill="#0000FF" text-anchor="start" font-weight="bold" letter-spacing="-0.3">999</text>
<text x="443.0" y="253.8" font-size="6" fill="#0000FF" text-anchor="end" font-weight="bold" letter-spacing="-0.3">513</text>
<text x="446.0" y="253.8" font-size="6" fill="#0000FF" text-anchor="start" font-weight="bold" letter-spacing="-0.3">1520.5</text>
<line x1="482.5" y1="204.5" x2="482.5" y2="242.5" stroke="#0000FF" stroke-width="1.3"/>
<rect x="477.5" y="242.5" width="9.0" height="8.0" stroke="#0000FF" stroke-width="1.2" fill="#fff"/>
<text x="482.2" y="248.5" font-size="6" fill="#0000FF" text-anchor="middle" font-weight="bold" >52</text>
<line x1="462.5" y1="258.5" x2="551.5" y2="258.5" stroke="#0000FF" stroke-width="1.2"/>
<line x1="482.5" y1="250.5" x2="482.5" y2="265.5" stroke="#0000FF" stroke-width="1.2"/>
<text x="480.7" y="256.79999999999995" font-size="6" fill="#0000FF" text-anchor="end" font-weight="bold" letter-spacing="-0.3">225</text>
<text x="483.7" y="256.79999999999995" font-size="6" fill="#0000FF" text-anchor="start" font-weight="bold" letter-spacing="-0.3">795.5</text>
<text x="480.7" y="263.79999999999995" font-size="6" fill="#0000FF" text-anchor="end" font-weight="bold" letter-spacing="-0.3">524.5</text>
<text x="483.7" y="263.79999999999995" font-size="6" fill="#0000FF" text-anchor="start" font-weight="bold" letter-spacing="-0.3">1422.2</text>
<line x1="551.5" y1="204.5" x2="551.5" y2="212.5" stroke="#0000FF" stroke-width="1.3"/>
<rect x="547.5" y="212.5" width="9.0" height="8.0" stroke="#0000FF" stroke-width="1.2" fill="#fff"/>
<text x="551.6" y="218.39999999999998" font-size="6" fill="#0000FF" text-anchor="middle" font-weight="bold" >23</text>
<line x1="531.5" y1="228.5" x2="571.5" y2="228.5" stroke="#0000FF" stroke-width="1.2"/>
<line x1="551.5" y1="220.5" x2="551.5" y2="236.5" stroke="#0000FF" stroke-width="1.2"/>
<text x="550.1" y="226.70000000000002" font-size="6" fill="#0000FF" text-anchor="end" font-weight="bold" letter-spacing="-0.3">225</text>
<text x="553.1" y="226.70000000000002" font-size="6" fill="#0000FF" text-anchor="start" font-weight="bold" letter-spacing="-0.3">755.6</text>
<text x="550.1" y="233.70000000000002" font-size="6" fill="#0000FF" text-anchor="end" font-weight="bold" letter-spacing="-0.3">604.1</text>
<text x="553.1" y="233.70000000000002" font-size="6" fill="#0000FF" text-anchor="start" font-weight="bold" letter-spacing="-0.3">1401.6</text>
<polyline points="551.5,236.5 551.5,350.5 559.5,350.5 559.5,381.5" stroke="#0000FF" stroke-width="1.3" fill="none" stroke-linejoin="miter"/>
<rect x="549.5" y="253.4" width="4.3" height="4.9" fill="#C0C0F8" stroke="#0000FF" stroke-width="1"/>
<rect x="555.5" y="381.5" width="9.0" height="8.0" stroke="#0000FF" stroke-width="1.2" fill="#fff"/>
<text x="559.8" y="387.8" font-size="6" fill="#0000FF" text-anchor="middle" font-weight="bold" >29</text>
<line x1="539.5" y1="397.5" x2="579.5" y2="397.5" stroke="#0000FF" stroke-width="1.2"/>
<line x1="559.5" y1="389.5" x2="559.5" y2="404.5" stroke="#0000FF" stroke-width="1.2"/>
<text x="558.3" y="395.59999999999997" font-size="6" fill="#0000FF" text-anchor="end" font-weight="bold" letter-spacing="-0.3">225</text>
<text x="561.3" y="395.59999999999997" font-size="6" fill="#0000FF" text-anchor="start" font-weight="bold" letter-spacing="-0.3">495.5</text>
<text x="558.3" y="402.59999999999997" font-size="6" fill="#0000FF" text-anchor="end" font-weight="bold" letter-spacing="-0.3">79.59</text>
<text x="561.3" y="402.59999999999997" font-size="6" fill="#0000FF" text-anchor="start" font-weight="bold" letter-spacing="-0.3">1265.6</text>
<line x1="559.5" y1="404.5" x2="559.5" y2="444.5" stroke="#0000FF" stroke-width="1.3"/>
<line x1="597.5" y1="214.5" x2="597.5" y2="239.5" stroke="#0000FF" stroke-width="1.3"/>
<rect x="593.5" y="239.5" width="9.0" height="8.0" stroke="#0000FF" stroke-width="1.2" fill="#fff"/>
<text x="597.8" y="245.6" font-size="6" fill="#0000FF" text-anchor="middle" font-weight="bold" >40</text>
<line x1="577.5" y1="255.5" x2="711.5" y2="255.5" stroke="#0000FF" stroke-width="1.2"/>
<line x1="597.5" y1="247.5" x2="597.5" y2="263.5" stroke="#0000FF" stroke-width="1.2"/>
<text x="596.3" y="253.70000000000002" font-size="6" fill="#0000FF" text-anchor="end" font-weight="bold" letter-spacing="-0.3">30</text>
<text x="599.3" y="253.70000000000002" font-size="6" fill="#0000FF" text-anchor="start" font-weight="bold" letter-spacing="-0.3">349.1</text>
<text x="596.3" y="260.7" font-size="6" fill="#0000FF" text-anchor="end" font-weight="bold" letter-spacing="-0.3">604.1</text>
<text x="599.3" y="260.7" font-size="6" fill="#0000FF" text-anchor="start" font-weight="bold" letter-spacing="-0.3">1212.4</text>
<polygon points="715,255.2 709.8,252 711,255.2 709.8,258.4" fill="#0000FF"/>
<rect x="715.3" y="252" width="5" height="5.8" fill="#C0C0F8" stroke="#0000FF" stroke-width="1"/>
<line x1="720.5" y1="217.5" x2="720.5" y2="227.5" stroke="#0000FF" stroke-width="1.3"/>
<rect x="715.5" y="227.5" width="9.0" height="8.0" stroke="#0000FF" stroke-width="1.2" fill="#fff"/>
<text x="720.4" y="233.2" font-size="6" fill="#0000FF" text-anchor="middle" font-weight="bold" >37</text>
<line x1="700.5" y1="242.5" x2="740.5" y2="242.5" stroke="#0000FF" stroke-width="1.2"/>
<line x1="720.5" y1="235.5" x2="720.5" y2="249.5" stroke="#0000FF" stroke-width="1.2"/>
<text x="718.9" y="240.6" font-size="6" fill="#0000FF" text-anchor="end" font-weight="bold" letter-spacing="-0.3">30</text>
<text x="721.9" y="240.6" font-size="6" fill="#0000FF" text-anchor="start" font-weight="bold" letter-spacing="-0.3">349.1</text>
<text x="718.9" y="247.6" font-size="6" fill="#0000FF" text-anchor="end" font-weight="bold" letter-spacing="-0.3">604.1</text>
<text x="721.9" y="247.6" font-size="6" fill="#0000FF" text-anchor="start" font-weight="bold" letter-spacing="-0.3">1212.4</text>
<line x1="720.5" y1="249.5" x2="720.5" y2="354.5" stroke="#0000FF" stroke-width="1.3"/>
<rect x="728.5" y="338.5" width="9.0" height="8.0" stroke="#0000FF" stroke-width="1.2" fill="#fff"/>
<text x="732.8" y="344.4" font-size="6" fill="#0000FF" text-anchor="middle" font-weight="bold" >35</text>
<line x1="711.5" y1="354.5" x2="751.5" y2="354.5" stroke="#0000FF" stroke-width="1.2"/>
<line x1="732.5" y1="346.5" x2="732.5" y2="361.5" stroke="#0000FF" stroke-width="1.2"/>
<text x="731.3" y="352.79999999999995" font-size="6" fill="#0000FF" text-anchor="end" font-weight="bold" letter-spacing="-0.3">30</text>
<text x="734.3" y="352.79999999999995" font-size="6" fill="#0000FF" text-anchor="start" font-weight="bold" letter-spacing="-0.3">349.1</text>
<text x="731.3" y="359.79999999999995" font-size="6" fill="#0000FF" text-anchor="end" font-weight="bold" letter-spacing="-0.3">0</text>
<text x="734.3" y="359.79999999999995" font-size="6" fill="#0000FF" text-anchor="start" font-weight="bold" letter-spacing="-0.3">1212.4</text>
<line x1="766.5" y1="228.5" x2="766.5" y2="247.5" stroke="#0000FF" stroke-width="1.3"/>
<rect x="769.5" y="231.5" width="9.0" height="8.0" stroke="#0000FF" stroke-width="1.2" fill="#fff"/>
<text x="774.3" y="237.89999999999998" font-size="6" fill="#0000FF" text-anchor="middle" font-weight="bold" >45</text>
<line x1="755.5" y1="247.5" x2="794.5" y2="247.5" stroke="#0000FF" stroke-width="1.2"/>
<line x1="774.5" y1="239.5" x2="774.5" y2="257.5" stroke="#0000FF" stroke-width="1.2"/>
<text x="772.8" y="245.6" font-size="6" fill="#0000FF" text-anchor="end" font-weight="bold" letter-spacing="-0.3">1.8</text>
<text x="775.8" y="245.6" font-size="6" fill="#0000FF" text-anchor="start" font-weight="bold" letter-spacing="-0.3">122.2</text>
<text x="772.8" y="252.6" font-size="6" fill="#0000FF" text-anchor="end" font-weight="bold" letter-spacing="-0.3">609.1</text>
<text x="775.8" y="252.6" font-size="6" fill="#0000FF" text-anchor="start" font-weight="bold" letter-spacing="-0.3">1044.6</text>
<polyline points="774.5,257.5 813.5,257.5 813.5,264.5" stroke="#0000FF" stroke-width="1.3" fill="none" stroke-linejoin="miter"/>
<polyline points="813.5,312.5 813.5,318.5 782.5,318.5 782.5,358.5" stroke="#0000FF" stroke-width="1.3" fill="none" stroke-linejoin="miter"/>
<polyline points="831.5,275.5 831.5,257.5 847.5,257.5" stroke="#0000FF" stroke-width="1.3" fill="none" stroke-linejoin="miter"/>
<polyline points="834.5,303.5 834.5,318.5 847.5,318.5" stroke="#0000FF" stroke-width="1.3" fill="none" stroke-linejoin="miter"/>
<path d="M787,303.4 L787,286.7 L789,281 L791,276 L793.5,272.1 L796.2,271 L830.5,271 L833,272.1 L835.5,276 L838,281 L839.9,286.7 L839.9,303.4 L830.7,303.4 L830.7,312.6 L796.2,312.6 L796.2,303.4 Z" fill="#0000FF"/>
<path d="M796.2,274.8 L796.2,269.4 L800,269.4 L802.1,263.5 L824.2,263.5 L826.5,269.4 L830.5,269.4 L830.5,274.8 Z" fill="#C0C0F8" stroke="#0000FF" stroke-width="1"/>
<rect x="797" y="277" width="33" height="3.6999999999999886" fill="#C0C0F8"/>
<rect x="797" y="282.9" width="33" height="3.8000000000000114" fill="#C0C0F8"/>
<rect x="797" y="288.8" width="33" height="3.8000000000000114" fill="#C0C0F8"/>
<rect x="797" y="295.8" width="33" height="2.6999999999999886" fill="#C0C0F8"/>
<rect x="797" y="301.8" width="33" height="3.8000000000000114" fill="#C0C0F8"/>
<rect x="848.5" y="253.2" width="21.799999999999955" height="8.100000000000023" fill="#40C040" stroke="#000" stroke-width="1.2"/>
<line x1="848" y1="252.2" x2="848" y2="262.3" stroke="#000" stroke-width="2"/>
<line x1="870.8" y1="252.2" x2="870.8" y2="262.3" stroke="#000" stroke-width="2"/>
<polyline points="864.8,254.75 867.3,257.25 864.8,259.75" stroke="#0000FF" stroke-width="1.8" fill="none" stroke-linejoin="miter"/>
<rect x="848.5" y="314.6" width="21.799999999999955" height="8.099999999999966" fill="#40C040" stroke="#000" stroke-width="1.2"/>
<line x1="848" y1="313.6" x2="848" y2="323.7" stroke="#000" stroke-width="2"/>
<line x1="870.8" y1="313.6" x2="870.8" y2="323.7" stroke="#000" stroke-width="2"/>
<polyline points="854,316.15 851.5,318.65 854,321.15" stroke="#0000FF" stroke-width="1.8" fill="none" stroke-linejoin="miter"/>
<polyline points="871.5,257.5 936.5,257.5 936.5,273.5" stroke="#0000FF" stroke-width="1.3" fill="none" stroke-linejoin="miter"/>
<text x="879.5" y="253" font-size="5.5" fill="#0000FF" text-anchor="start" font-weight="bold" >105.7 T, 32310 m</text>
<text x="876.4" y="311" font-size="5.5" fill="#0000FF" text-anchor="start" font-weight="bold" >87.65 T</text>
<polyline points="871.5,318.5 897.5,318.5" stroke="#0000FF" stroke-width="1.3" fill="none" stroke-linejoin="miter"/>
<polyline points="912.5,322.5 916.5,322.5 916.5,318.5" stroke="#0000FF" stroke-width="1.3" fill="none" stroke-linejoin="miter"/>
<polygon points="896.5,315.5 897.5,315.5 906.5,315.5 907.5,316.5 910.5,317.5 912.5,320.5 912.5,322.5 911.5,325.5 913.5,328.5 898.5,328.5 900.5,325.5 900.5,321.5 896.5,321.5" stroke="#0000FF" stroke-width="1.2" fill="#FFFF88"/>
<rect x="905" y="321" width="2" height="2" fill="#0000FF"/>
<polyline points="916.5,318.5 934.5,318.5" stroke="#0000FF" stroke-width="1.3" fill="none" stroke-linejoin="miter"/>
<line x1="928.5" y1="272.5" x2="974.5" y2="272.5" stroke="#000" stroke-width="1.3"/>
<line x1="928.5" y1="272.5" x2="937.5" y2="315.5" stroke="#000" stroke-width="1.3"/>
<line x1="973.5" y1="272.5" x2="964.5" y2="315.5" stroke="#000" stroke-width="1.3"/>
<line x1="927.5" y1="285.5" x2="933.5" y2="280.5" stroke="#000" stroke-width="1"/>
<line x1="968.5" y1="280.5" x2="974.5" y2="285.5" stroke="#000" stroke-width="1"/>
<line x1="930.5" y1="298.5" x2="936.5" y2="293.5" stroke="#000" stroke-width="1"/>
<line x1="965.5" y1="293.5" x2="971.5" y2="298.5" stroke="#000" stroke-width="1"/>
<line x1="932.5" y1="309.5" x2="938.5" y2="304.5" stroke="#000" stroke-width="1"/>
<line x1="963.5" y1="304.5" x2="969.5" y2="309.5" stroke="#000" stroke-width="1"/>
<line x1="940.5" y1="261.5" x2="940.5" y2="272.5" stroke="#000" stroke-width="1.3"/>
<line x1="961.5" y1="261.5" x2="961.5" y2="272.5" stroke="#000" stroke-width="1.3"/>
<path d="M941,268.3 Q951,273.8 961.8,268.3 M941,271.8 Q951,266.8 961.8,271.8" stroke="#000" stroke-width="1" fill="none"/>
<path d="M937,275.3 H941 M939,275.3 L935.5,279.3 M939,275.3 L942.5,279.3 M939,275.3 V279.3" stroke="#0000FF" stroke-width="1" fill="none"/>
<path d="M948.5,275.3 H952.5 M950.5,275.3 L947.0,279.3 M950.5,275.3 L954.0,279.3 M950.5,275.3 V279.3" stroke="#0000FF" stroke-width="1" fill="none"/>
<path d="M961.5,275.3 H965.5 M963.5,275.3 L960.0,279.3 M963.5,275.3 L967.0,279.3 M963.5,275.3 V279.3" stroke="#0000FF" stroke-width="1" fill="none"/>
<rect x="934.5" y="315.5" width="33.0" height="3.0" stroke="#0000FF" stroke-width="1.2" fill="#C0C0F8"/>
<polyline points="782.5,318.5 782.5,354.5 786.5,354.5 786.5,358.5" stroke="#0000FF" stroke-width="1.3" fill="none" stroke-linejoin="miter"/>
<polygon points="780.5,361.5 782.5,359.5 791.5,359.5 792.5,357.5 792.5,372.5 789.5,368.5 786.5,370.5 785.5,374.5 780.5,374.5" stroke="#0000FF" stroke-width="1.2" fill="#FFFF99"/>
<rect x="785" y="363" width="2" height="2" fill="#0000FF"/>
<line x1="782.5" y1="374.5" x2="782.5" y2="432.5" stroke="#0000FF" stroke-width="1.3"/>
<rect x="778.9" y="384.8" width="7.8" height="22.399999999999977" fill="#40C040" stroke="#000" stroke-width="1.2"/>
<line x1="777.3" y1="384.3" x2="788.3" y2="384.3" stroke="#000" stroke-width="2"/>
<line x1="777.3" y1="407.7" x2="788.3" y2="407.7" stroke="#000" stroke-width="2"/>
<polyline points="780.3,401.7 782.8,404.2 785.3,401.7" stroke="#0000FF" stroke-width="1.8" fill="none" stroke-linejoin="miter"/>
<rect x="777.3" y="432.5" width="10.1" height="19.1" fill="#C0C0F8" stroke="#0000FF" stroke-width="1.2"/>
<polyline points="777.5,437.5 774.5,437.5 774.5,432.5" stroke="#0000FF" stroke-width="1" fill="none" stroke-linejoin="miter"/>
<polyline points="787.5,447.5 791.5,447.5 791.5,454.5" stroke="#0000FF" stroke-width="1" fill="none" stroke-linejoin="miter"/>
<polyline points="789.5,452.5 791.5,454.5 793.5,452.5" stroke="#0000FF" stroke-width="1" fill="none" stroke-linejoin="miter"/>
<rect x="310.3" y="445.8" width="8.3" height="22.19999999999999" fill="#40C040" stroke="#000" stroke-width="1.2"/>
<line x1="308.7" y1="445.3" x2="320.2" y2="445.3" stroke="#000" stroke-width="2"/>
<line x1="308.7" y1="468.5" x2="320.2" y2="468.5" stroke="#000" stroke-width="2"/>
<polyline points="311.95,451.3 314.45,448.8 316.95,451.3" stroke="#0000FF" stroke-width="1.8" fill="none" stroke-linejoin="miter"/>
<rect x="371.40000000000003" y="445.8" width="8.3" height="22.19999999999999" fill="#40C040" stroke="#000" stroke-width="1.2"/>
<line x1="369.8" y1="445.3" x2="381.3" y2="445.3" stroke="#000" stroke-width="2"/>
<line x1="369.8" y1="468.5" x2="381.3" y2="468.5" stroke="#000" stroke-width="2"/>
<polyline points="373.05,451.3 375.55,448.8 378.05,451.3" stroke="#0000FF" stroke-width="1.8" fill="none" stroke-linejoin="miter"/>
<rect x="386.70000000000005" y="445.8" width="8.3" height="22.19999999999999" fill="#40C040" stroke="#000" stroke-width="1.2"/>
<line x1="385.1" y1="445.3" x2="396.6" y2="445.3" stroke="#000" stroke-width="2"/>
<line x1="385.1" y1="468.5" x2="396.6" y2="468.5" stroke="#000" stroke-width="2"/>
<polyline points="388.35,462.5 390.85,465.0 393.35,462.5" stroke="#0000FF" stroke-width="1.8" fill="none" stroke-linejoin="miter"/>
<rect x="555.4" y="445.8" width="8.3" height="22.19999999999999" fill="#40C040" stroke="#000" stroke-width="1.2"/>
<line x1="553.8" y1="445.3" x2="565.3" y2="445.3" stroke="#000" stroke-width="2"/>
<line x1="553.8" y1="468.5" x2="565.3" y2="468.5" stroke="#000" stroke-width="2"/>
<polyline points="557.05,451.3 559.55,448.8 562.05,451.3" stroke="#0000FF" stroke-width="1.8" fill="none" stroke-linejoin="miter"/>
<rect x="283.5" y="452.3" width="15" height="6" fill="#FFE0C0" stroke="#FF8000" stroke-width="1.2"/>
<line x1="291.5" y1="458.5" x2="291.5" y2="510.5" stroke="#FF8000" stroke-width="1.3"/>
<polygon points="291.4,471.5 289,467.5 293.8,467.5" fill="#FF8000"/></svg>
<div class="a" style="left:236px;top:621px;font-size:12px;line-height:15.4px;color:#000">Ambient temperature<br>Gross power<br>Net power<br>Net electric efficiency(LHV)</div>
<div class="a" style="left:400px;top:621px;font-size:12px;line-height:15.4px;color:#000">80 F<br>281420 kW<br>270039 kW<br>52.45 %</div>
<div class="a" style="left:897px;top:101px;width:82px;height:31px;font-size:9.5px;color:#000">
 <div style="position:absolute;left:0;top:15px;width:82px;height:1px;background:#000"></div>
 <div style="position:absolute;left:40px;top:0;width:1px;height:31px;background:#000"></div>
 <div style="position:absolute;right:44px;top:1px">psia</div><div style="position:absolute;left:43px;top:1px">F</div>
 <div style="position:absolute;right:44px;top:17px">kpph</div><div style="position:absolute;left:43px;top:17px">BTU/lb</div>
</div>
<svg class="a" style="left:984px;top:80px" width="42" height="44">
<polygon points="21.5,1 16,8 27,8" fill="#D8D8D8" stroke="#505050" stroke-width="1"/>
<polygon points="21.5,41 16,34 27,34" fill="#D8D8D8" stroke="#505050" stroke-width="1"/>
<polygon points="2,21 10,15 10,27" fill="#D8D8D8" stroke="#505050" stroke-width="1"/>
<polygon points="40,21 32,15 32,27" fill="#D8D8D8" stroke="#505050" stroke-width="1"/>
<rect x="11.5" y="11.5" width="20" height="20" fill="#fff" stroke="#000" stroke-width="1.3"/>
<rect x="12.5" y="12" width="11" height="5.5" fill="#FFFF00" stroke="#E00000" stroke-width="1.2"/>
</svg>
<div class="a" style="left:990px;top:130px;width:30px;height:28px;background:#DCDCDC;border-top:2px solid #A0A0A0;border-left:2px solid #A0A0A0"><div style="position:absolute;left:2px;top:2px;width:24px;height:22px;background:#F4F4F4"><svg width="24" height="22"><path d="M8,15 L5,11 Q4.5,9.5 6,10 L8,12 L8,6 Q9,4.8 10,6 L10,10 L10,4.5 Q11,3.3 12,4.5 L12,10 L12,5 Q13,4 14,5 L14,10 L14,6.5 Q15,5.5 16,6.5 L16,14 Q16,18 13,19 L10.5,19 Q8.5,18 8,15Z" fill="#fff" stroke="#000" stroke-width="0.9"/></svg></div></div>
<div class="a" style="left:990px;top:160px;width:30px;height:30px;background:#DCDCDC"><div style="position:absolute;left:3px;top:3px;width:24px;height:24px;background:#F8F8F8;overflow:hidden"><svg width="24" height="24"><rect x="3.5" y="4.5" width="17" height="17" fill="none" stroke="#000" stroke-width="1" stroke-dasharray="2,1.6"/><path d="M0.5,4.5 H6 M3.5,1.5 V7" stroke="#000" stroke-width="1"/></svg></div></div>
<div class="a" style="left:990px;top:197px;width:30px;height:30px;background:#DCDCDC"><div style="position:absolute;left:3px;top:3px;width:24px;height:24px;background:#F8F8F8;overflow:hidden"><svg width="24" height="24"><path d="M9.5,21 V6 M4,5 Q10,3 16,3.5 Q19,5 20,8" stroke="#000" stroke-width="3" fill="none"/></svg></div></div>
<div class="a" style="left:990px;top:235px;width:30px;height:30px;background:#DCDCDC"><div style="position:absolute;left:3px;top:3px;width:24px;height:24px;background:#F8F8F8;overflow:hidden"><svg width="24" height="24"><circle cx="10.6" cy="10.1" r="8" fill="#fff" stroke="#000" stroke-width="1"/><text x="10.6" y="13" font-size="8" font-weight="bold" text-anchor="middle" fill="#000" letter-spacing="-0.4">Full</text><path d="M15,17 L20.6,21.3" stroke="#000" stroke-width="1.8"/></svg></div></div>
<div class="a" style="left:990px;top:266px;width:30px;height:30px;background:#DCDCDC"><div style="position:absolute;left:3px;top:3px;width:24px;height:24px;background:#F8F8F8;overflow:hidden"><svg width="24" height="24"><polygon points="13,2 15.7,2 15.7,21.6 8.2,21.6" fill="#888"/><path d="M4,16.7 H19" stroke="#000" stroke-width="2"/></svg></div></div>
<div class="a" style="left:990px;top:303px;width:30px;height:30px;background:#DCDCDC"><div style="position:absolute;left:3px;top:3px;width:24px;height:24px;background:#F8F8F8;overflow:hidden"><svg width="24" height="24"><path d="M1.5,6 H10.5 L9,9.5 Q7,11.5 5.5,11.5 Q3.5,11 2.5,9Z M13.5,6 H22.5 L21,9.5 Q19,11.5 17.5,11.5 Q15.5,11 14.5,9Z" fill="#fff" stroke="#F00000" stroke-width="1.1"/><path d="M6,10.5 L7.5,9 M18,10.5 L19.5,9" stroke="#000" stroke-width="1.3"/><rect x="7.5" y="14.5" width="14" height="8" fill="#E0E080" stroke="#000" stroke-width="1.1"/><path d="M9,19.5 H11.5 L14,16.5 L16.5,19.5 L19,17 H20" stroke="#222" stroke-width="0.8" fill="none"/></svg></div></div>
<div class="a" style="left:990px;top:334px;width:30px;height:30px;background:#DCDCDC"><div style="position:absolute;left:3px;top:3px;width:24px;height:24px;background:#F8F8F8;overflow:hidden"><svg width="24" height="24"><path d="M1.5,6 H10.5 L9,9.5 Q7,11.5 5.5,11.5 Q3.5,11 2.5,9Z M13.5,6 H22.5 L21,9.5 Q19,11.5 17.5,11.5 Q15.5,11 14.5,9Z" fill="#fff" stroke="#F00000" stroke-width="1.1"/><path d="M6,10.5 L7.5,9 M18,10.5 L19.5,9" stroke="#000" stroke-width="1.3"/><path d="M6.2,18.2 H22.8 M15,13.8 V22.6" stroke="#000" stroke-width="1"/><path d="M10,17 V13.5 H12 V15.5 H10 M17.5,13.5 H21 M19.2,13.5 V17 M8.5,23 V19.5 L10,21 L11.5,19.5 V23 M18,19.5 V23 M21,19.5 V23 M18,21.2 H21" stroke="#000" stroke-width="0.9" fill="none"/></svg></div></div>
<div class="a" style="left:990px;top:371px;width:30px;height:30px;background:#DCDCDC"><div style="position:absolute;left:3px;top:3px;width:24px;height:24px;background:#F8F8F8;overflow:hidden"><svg width="24" height="24"><path d="M2.5,6 V18 M8,10 L3,14.5 L8.5,18 M9,6 L12,18 L15.5,7 L19,18 L22,6" stroke="#111" stroke-width="1.1" fill="none"/></svg></div></div>
<div class="a" style="left:990px;top:402px;width:30px;height:30px;background:#DCDCDC"><div style="position:absolute;left:3px;top:3px;width:24px;height:24px;background:#F8F8F8;overflow:hidden"><svg width="24" height="24"><path d="M1,12.5 H23 M11.5,2 V23" stroke="#000" stroke-width="1.1"/><path d="M3,10 V3 H7 Q8.5,3 8.5,5 Q8.5,7 7,7 H3 M14,3 H20 M17,3 V10 M3,22 V14.5 L6,19 L9,14.5 V22 M14,14.5 V22 M20,14.5 V22 M14,18 H20" stroke="#000" stroke-width="1" fill="none"/></svg></div></div>
<div class="a" style="left:990px;top:433px;width:30px;height:30px;background:#DCDCDC"><div style="position:absolute;left:3px;top:3px;width:24px;height:24px;background:#F8F8F8;overflow:hidden"><svg width="24" height="24"><path d="M1.5,5.5 L7.5,18 M7.5,5.5 L1.5,18 M9,10 H14 M9,13.5 H14 M16,7 Q17,5.5 19,5.5 Q21.5,5.5 21.5,8 Q21.5,11 18.5,11.3 Q22,11.5 22,14.5 Q22,18 19,18 Q16.5,18 15.8,16" stroke="#111" stroke-width="1.1" fill="none"/></svg></div></div>
<div class="a" style="left:990px;top:465px;width:30px;height:29px;background:#DCDCDC"><div style="position:absolute;left:3px;top:3px;width:24px;height:23px;background:#F8F8F8;overflow:hidden"><svg width="24" height="24"><path d="M3,1 L8,9 M8,1 L3,9 M10,3.5 H14 M10,6.5 H14 M16,2 Q17,0.8 18.5,1 Q20.5,1 20.5,3 Q20.5,4.8 18.2,5 Q21,5.2 21,7 Q21,9.2 18.5,9.2 Q16.5,9.2 16,8 M2,11.5 H22 M3,14 H8 L3,22 H8 M10,16.5 H14 M10,19.5 H14 M20,22 V14 L16,19.5 H21.5" stroke="#111" stroke-width="1" fill="none"/></svg></div></div>
<div class="a" style="left:990px;top:495px;width:30px;height:30px;background:#DCDCDC"><div style="position:absolute;left:3px;top:3px;width:24px;height:24px;background:#F8F8F8;overflow:hidden"><svg width="24" height="24"><path d="M1,13.5 H23 M1,19.5 H23 M10.5,9 V23 M16,9 V23" stroke="#B8B8B8" stroke-width="0.9"/><path d="M1,1 L10,10 M10.5,1 V9" stroke="#777" stroke-width="0.8"/><path d="M12,4.5 L13,3.5 V9.5 M17.5,4.5 Q18.5,3 20,3.5 Q21,4.5 20,6 L17.5,9.5 H21" stroke="#000" stroke-width="1" fill="none"/><path d="M2.5,16.5 V10.5 H5.5 Q7,10.5 7,12 Q7,13.5 5.5,13.5 H2.5 M2,17.5 H7 M4.5,17.5 V23" stroke="#000" stroke-width="1.1" fill="none"/></svg></div></div>
<div class="a" style="left:990px;top:526px;width:30px;height:30px;background:#DCDCDC"><div style="position:absolute;left:3px;top:3px;width:24px;height:24px;background:#F8F8F8;overflow:hidden"><svg width="24" height="24"><rect x="2.5" y="2.5" width="19" height="18.5" fill="#fff" stroke="#000" stroke-width="1.3"/><path d="M6,6 H18 M12,6 V18" stroke="#000" stroke-width="2.2"/></svg></div></div>
<div class="a" style="left:990px;top:563px;width:30px;height:30px;background:#DCDCDC"><div style="position:absolute;left:3px;top:3px;width:24px;height:24px;background:#F8F8F8;overflow:hidden"><svg width="24" height="24"><path d="M3,3 L21,21" stroke="#000" stroke-width="1"/></svg></div></div>
<div class="a" style="left:990px;top:594px;width:30px;height:30px;background:#DCDCDC"><div style="position:absolute;left:3px;top:3px;width:24px;height:24px;background:#F8F8F8;overflow:hidden"><svg width="24" height="24"><path d="M4.5,3 V12 L13,16 L19.5,12 V21 L13,18.5 L4.5,21" stroke="#000" stroke-width="1" fill="none"/></svg></div></div>
<div class="a" style="left:990px;top:625px;width:30px;height:30px;background:#DCDCDC"><div style="position:absolute;left:3px;top:3px;width:24px;height:24px;background:#F8F8F8;overflow:hidden"><svg width="24" height="24"><rect x="2.5" y="2.5" width="19.5" height="19" fill="#fff" stroke="#000" stroke-width="1.3"/></svg></div></div>
<div class="a" style="left:989px;top:655px;width:31px;height:15px;background:#EBEBEB;border-bottom:2px solid #808080;border-right:1px solid #909090"><svg width="30" height="13"><polygon points="15,4 10.5,9 19.5,9" fill="#000"/></svg></div>
<div class="a" style="left:989px;top:671px;width:31px;height:15px;background:#EBEBEB;border-bottom:2px solid #808080;border-right:1px solid #909090"><svg width="30" height="13"><polygon points="15,10 10.5,5 19.5,5" fill="#000"/></svg></div>
<div class="a" style="left:1034px;top:0;width:2px;height:695px;background:#3a3a3a"></div>
</body></html>
